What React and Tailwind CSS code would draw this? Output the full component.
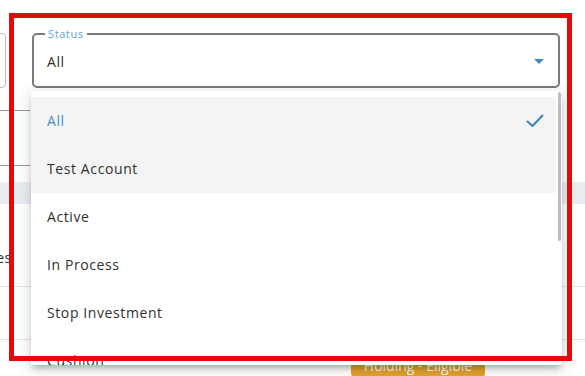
const OPTIONS = ['All', 'Test Account', 'Active', 'In Process', 'Stop Investment', 'Cushion']

export default function App() {
  return (
    <div
      className="relative w-[585px] h-[376px] overflow-hidden bg-white text-[#2f2f2f] tracking-[0.6px]"
      style={{ fontFamily: "'Open Sans', 'DejaVu Sans', sans-serif" }}
    >
      {/* ── page behind the menu ── */}
      <div className="flex pt-[33px]">
        <div className="-ml-[194px] w-[200px] h-[55px] rounded border border-[#bdbdbd]" />
        <div className="relative ml-[26px] w-[528px] h-[55px] rounded-[5px] border-2 border-[#7b7b7b] flex items-center pl-[13px] pr-[14px]">
          <span className="absolute -top-[8px] left-[11px] px-[3px] bg-white text-[11px] leading-[14px] text-[#5fa3d3]">
            Status
          </span>
          <span className="flex-1 text-[14px] text-[#2b2b2b] pt-[1px]">All</span>
          <svg width="10" height="5" viewBox="0 0 10 5" className="mt-[1px]">
            <path d="M0 0h10L5 5z" fill="#3f8cc4" />
          </svg>
        </div>
      </div>

      <div className="mt-[22px] h-[55px] border-t border-[#9a9a9a] w-[30px]" />
      <div className="border-t border-[#9a9a9a] w-[30px]" />
      <div className="mt-[16px] h-[22px] bg-[#e9edf1]" />
      <div className="h-[82px] flex items-center pt-[24px] -ml-[36px] text-[14px] text-[#333]">Shares</div>
      <div className="h-[53px] border-t border-[#e3e3e3]" />
      <div className="border-t border-[#e3e3e3] flex pl-[351px] pt-[12px]">
        <span className="w-[134px] h-[26px] rounded-[5px] bg-[#e3a32b] text-white text-[14px] tracking-normal flex items-center justify-center">
          Holding - Eligible
        </span>
      </div>

      {/* ── open select menu ── */}
      <div className="absolute left-[31px] top-[91px] w-[531px] h-[274px] bg-white overflow-hidden shadow-[0_5px_6px_-2px_rgba(0,0,0,0.25),0_3px_14px_2px_rgba(0,0,0,0.12)]">
        <div className="flex h-full">
          <div className="flex-1 pt-[6px]">
            {OPTIONS.map((opt, i) => (
              <div
                key={opt}
                className={[
                  'h-[48px] flex items-center pl-[16px] pr-[12px] pb-[1px] text-[14px]',
                  i < 2 ? 'bg-[#f4f4f4]' : 'bg-white',
                  i === 0 ? 'text-[#3f8fcc]' : 'text-[#2f2f2f]',
                ].join(' ')}
              >
                <span className="flex-1">{opt}</span>
                {i === 0 && (
                  <svg width="18" height="14" viewBox="0 0 18 14" fill="none">
                    <path d="M1.5 7.5l5 4.5L16.5 1.5" stroke="#3d81b8" strokeWidth="2" strokeLinecap="round" strokeLinejoin="round" />
                  </svg>
                )}
              </div>
            ))}
          </div>
          <div className="w-[6px] flex justify-center bg-white">
            <div className="mt-[1px] w-[3px] h-[149px] rounded bg-[#bdbdbd]" />
          </div>
        </div>
      </div>

      {/* ── highlight frame ── */}
      <div className="absolute left-[9px] top-[13px] w-[563px] h-[348px] border-[5px] border-[#e20a0a] pointer-events-none" />
    </div>
  )
}
